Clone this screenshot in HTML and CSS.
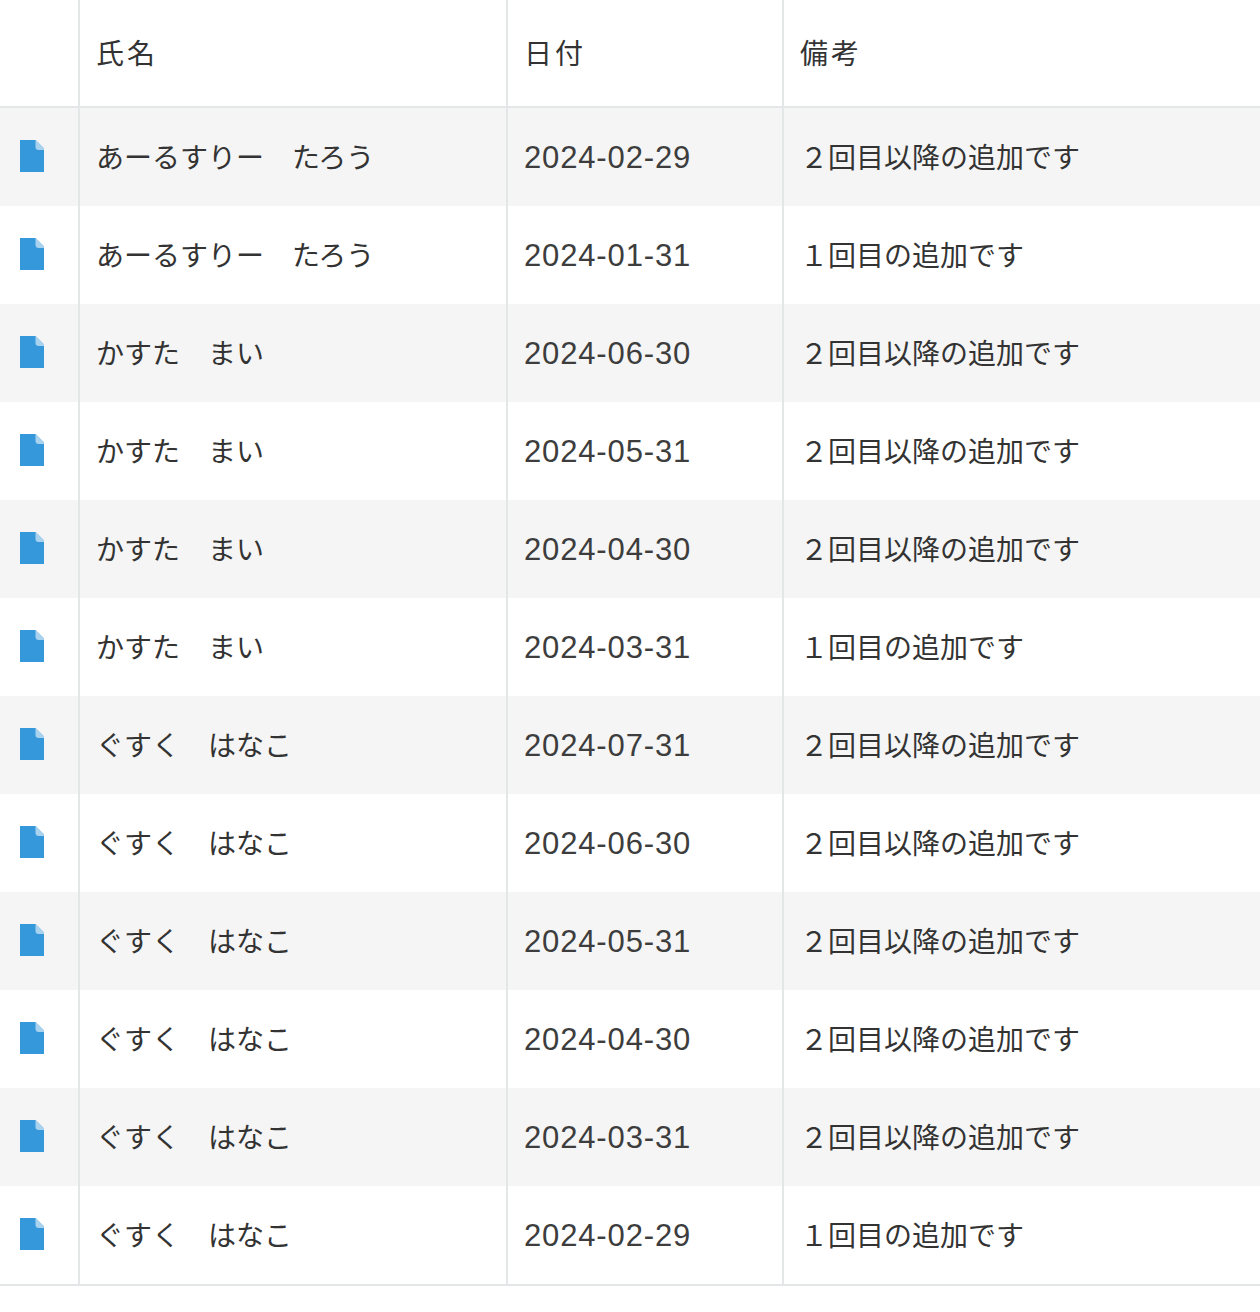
FILE: index.html
```html
<!DOCTYPE html>
<html lang="ja">
<head>
<meta charset="utf-8">
<title>一覧</title>
<link rel="stylesheet" href="styles.css">
</head>
<body>
<svg class="defs" width="0" height="0" aria-hidden="true"><defs><symbol id="doc" viewBox="0 0 24 32"><path d="M0 0H15.5L24 8.5V32H0Z" fill="#3498db"/><path d="M15.5 0L24 8.5V10H18.5C16.8 10 15.5 8.7 15.5 7Z" fill="#a9d2ef"/></symbol></defs></svg>
<table class="list">
<colgroup><col class="c-icon"><col class="c-name"><col class="c-date"><col></colgroup>
<thead><tr><th></th><th>氏名</th><th>日付</th><th>備考</th></tr></thead>
<tbody>
<tr><td class="icon"><svg class="doc"><use href="#doc"/></svg></td><td>あーるすりー　たろう</td><td class="date">2024-02-29</td><td>２回目以降の追加です</td></tr>
<tr><td class="icon"><svg class="doc"><use href="#doc"/></svg></td><td>あーるすりー　たろう</td><td class="date">2024-01-31</td><td>１回目の追加です</td></tr>
<tr><td class="icon"><svg class="doc"><use href="#doc"/></svg></td><td>かすた　まい</td><td class="date">2024-06-30</td><td>２回目以降の追加です</td></tr>
<tr><td class="icon"><svg class="doc"><use href="#doc"/></svg></td><td>かすた　まい</td><td class="date">2024-05-31</td><td>２回目以降の追加です</td></tr>
<tr><td class="icon"><svg class="doc"><use href="#doc"/></svg></td><td>かすた　まい</td><td class="date">2024-04-30</td><td>２回目以降の追加です</td></tr>
<tr><td class="icon"><svg class="doc"><use href="#doc"/></svg></td><td>かすた　まい</td><td class="date">2024-03-31</td><td>１回目の追加です</td></tr>
<tr><td class="icon"><svg class="doc"><use href="#doc"/></svg></td><td>ぐすく　はなこ</td><td class="date">2024-07-31</td><td>２回目以降の追加です</td></tr>
<tr><td class="icon"><svg class="doc"><use href="#doc"/></svg></td><td>ぐすく　はなこ</td><td class="date">2024-06-30</td><td>２回目以降の追加です</td></tr>
<tr><td class="icon"><svg class="doc"><use href="#doc"/></svg></td><td>ぐすく　はなこ</td><td class="date">2024-05-31</td><td>２回目以降の追加です</td></tr>
<tr><td class="icon"><svg class="doc"><use href="#doc"/></svg></td><td>ぐすく　はなこ</td><td class="date">2024-04-30</td><td>２回目以降の追加です</td></tr>
<tr><td class="icon"><svg class="doc"><use href="#doc"/></svg></td><td>ぐすく　はなこ</td><td class="date">2024-03-31</td><td>２回目以降の追加です</td></tr>
<tr><td class="icon"><svg class="doc"><use href="#doc"/></svg></td><td>ぐすく　はなこ</td><td class="date">2024-02-29</td><td>１回目の追加です</td></tr>
</tbody>
</table>
</body>
</html>
```
FILE: styles.css
```css
html, body {
  margin: 0;
  background: #fff;
}
body {
  font-family: "Noto Sans CJK JP", sans-serif;
  font-size: 28px;
  color: #333;
}
.defs {
  position: absolute;
}
.list {
  width: 1260px;
  table-layout: fixed;
  border-collapse: separate;
  border-spacing: 0;
  margin-bottom: 26px;
  border-bottom: 2px solid #e4e7e7;
}
.c-icon { width: 80px; }
.c-name { width: 428px; }
.c-date { width: 276px; }
.list th, .list td {
  box-sizing: border-box;
  padding: 0 0 2px 16px;
  border-right: 2px solid #e4e7e7;
  text-align: left;
  font-weight: 400;
  white-space: nowrap;
}
.list th:last-child, .list td:last-child {
  border-right: 0;
}
.list th {
  height: 108px;
  padding-bottom: 2px;
  border-bottom: 2px solid #e4e7e7;
  letter-spacing: 3px;
}
.list td {
  height: 98px;
}
.list tbody tr:nth-child(odd) {
  background: #f5f5f5;
}
.list td.icon {
  padding: 0 0 2px 20px;
}
.doc {
  display: block;
  width: 24px;
  height: 32px;
}
.list td.date {
  padding-top: 2px;
  padding-bottom: 0;
  font-family: "Liberation Sans", sans-serif;
  font-size: 31px;
  letter-spacing: 0.85px;
  color: #3d3d3d;
}
```
